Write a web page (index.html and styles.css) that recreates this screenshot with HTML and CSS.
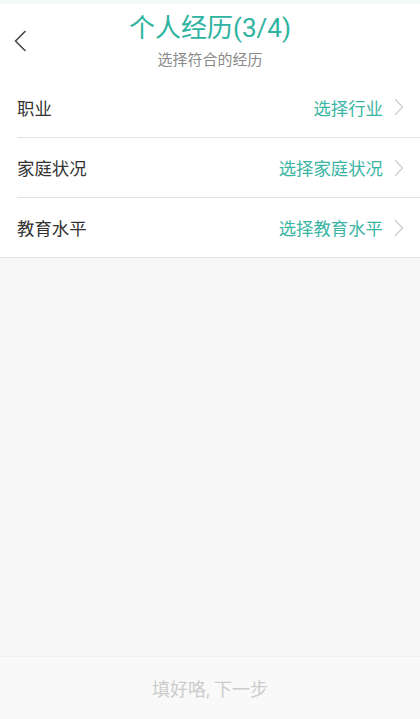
FILE: index.html
```html
<!DOCTYPE html>
<html lang="zh">
<head>
<meta charset="utf-8">
<link rel="stylesheet" href="styles.css">
</head>
<body>
<div class="page">
  <header class="header">
    <div class="back">
      <svg width="14" height="22" viewBox="0 0 14 22"><path d="M12 1.5 L2.5 11 L12 20.5" fill="none" stroke="#444" stroke-width="1.6" stroke-linecap="round" stroke-linejoin="round"/></svg>
    </div>
    <div class="titles">
      <div class="title">个人经历(3/4)</div>
      <div class="subtitle">选择符合的经历</div>
    </div>
    <div></div>
  </header>
  <div class="list">
    <div class="row">
      <span class="label">职业</span>
      <span class="value">选择行业</span>
      <svg class="chev" width="10" height="18" viewBox="0 0 10 18"><path d="M1.5 1.5 L8.5 9 L1.5 16.5" fill="none" stroke="#d0d0d0" stroke-width="1.4" stroke-linecap="round" stroke-linejoin="round"/></svg>
    </div>
    <div class="row">
      <span class="label">家庭状况</span>
      <span class="value">选择家庭状况</span>
      <svg class="chev" width="10" height="18" viewBox="0 0 10 18"><path d="M1.5 1.5 L8.5 9 L1.5 16.5" fill="none" stroke="#d0d0d0" stroke-width="1.4" stroke-linecap="round" stroke-linejoin="round"/></svg>
    </div>
    <div class="row">
      <span class="label">教育水平</span>
      <span class="value">选择教育水平</span>
      <svg class="chev" width="10" height="18" viewBox="0 0 10 18"><path d="M1.5 1.5 L8.5 9 L1.5 16.5" fill="none" stroke="#d0d0d0" stroke-width="1.4" stroke-linecap="round" stroke-linejoin="round"/></svg>
    </div>
  </div>
  <div class="spacer"></div>
  <footer class="footer">填好咯, 下一步</footer>
</div>
</body>
</html>
```
FILE: styles.css
```css
* { box-sizing: border-box; }
html, body { margin: 0; padding: 0; }
body {
  font-family: Roboto, "Noto Sans CJK SC", sans-serif;
  background: #f6f6f6;
}
.page {
  display: flex;
  flex-direction: column;
  min-height: 100vh;
}
.header {
  background: #fff;
  border-top: 4px solid #f0faf8;
  height: 77px;
  display: grid;
  grid-template-columns: 1fr auto 1fr;
  align-items: start;
}
.back {
  padding: 26px 0 0 13px;
  height: 40px;
}
.back svg { display: block; }
.titles {
  display: flex;
  flex-direction: column;
  align-items: center;
  padding-top: 7px;
}
.title {
  font-size: 26px;
  line-height: 34px;
  color: #2db3a0;
}
.subtitle {
  font-size: 15px;
  line-height: 20px;
  color: #8a8a8a;
  margin-top: 5px;
}
.list {
  background: #fff;
  border-bottom: 1px solid #e2e2e2;
}
.row {
  height: 60px;
  display: flex;
  align-items: center;
  margin-left: 17px;
  padding-right: 16px;
  border-top: 1px solid #e2e2e2;
}
.row:first-child { border-top: none; }
.label {
  font-size: 17.4px;
  color: #333;
  flex: 1;
}
.value {
  font-size: 17.4px;
  color: #3ab5a4;
}
.chev {
  display: block;
  margin-left: 11px;
}
.spacer { flex: 1; }
.footer {
  height: 63px;
  border-top: 1px solid #efefef;
  background: #f9f9f9;
  display: flex;
  align-items: center;
  justify-content: center;
  font-size: 18px;
  color: #cccccc;
}
```
